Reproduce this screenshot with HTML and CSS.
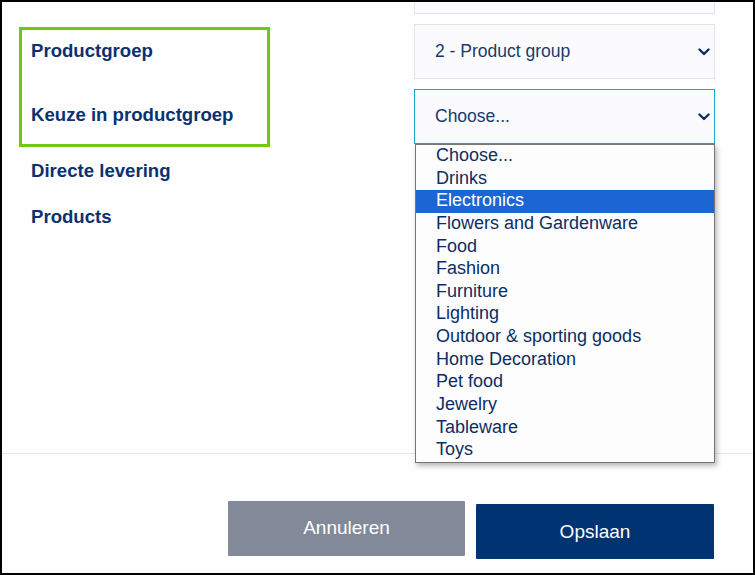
FILE: index.html
```html
<!DOCTYPE html>
<html lang="nl">
<head>
<meta charset="utf-8">
<title>Productgroep</title>
<link rel="stylesheet" href="styles.css">
</head>
<body>
<div class="frame">
  <div class="form">
    <div class="labels">
      <div class="highlight-box">
        <div class="label label-first">Productgroep</div>
        <div class="label label-second">Keuze in productgroep</div>
      </div>
      <div class="label label-directe">Directe levering</div>
      <div class="label label-products">Products</div>
    </div>
    <div class="fields">
      <div class="stub"></div>
      <div class="select">
        <span>2 - Product group</span>
        <svg class="chev" width="12" height="8" viewBox="0 0 12 8"><polyline points="1.5,1.5 6,6 10.5,1.5" fill="none" stroke="#0d2f66" stroke-width="2.4" stroke-linecap="round" stroke-linejoin="round"/></svg>
      </div>
      <div class="select-wrap">
        <div class="select select-active">
          <span>Choose...</span>
          <svg class="chev" width="12" height="8" viewBox="0 0 12 8"><polyline points="1.5,1.5 6,6 10.5,1.5" fill="none" stroke="#0d2f66" stroke-width="2.4" stroke-linecap="round" stroke-linejoin="round"/></svg>
        </div>
        <ul class="dropdown">
          <li>Choose...</li>
          <li>Drinks</li>
          <li class="selected">Electronics</li>
          <li>Flowers and Gardenware</li>
          <li>Food</li>
          <li>Fashion</li>
          <li>Furniture</li>
          <li>Lighting</li>
          <li>Outdoor &amp; sporting goods</li>
          <li>Home Decoration</li>
          <li>Pet food</li>
          <li>Jewelry</li>
          <li>Tableware</li>
          <li>Toys</li>
        </ul>
      </div>
    </div>
  </div>
  <div class="footer">
    <button class="btn btn-cancel">Annuleren</button>
    <button class="btn btn-save">Opslaan</button>
  </div>
</div>
</body>
</html>
```

FILE: styles.css
```css
html, body {
  margin: 0;
  padding: 0;
  background: #fff;
}

.frame {
  width: 755px;
  height: 575px;
  box-sizing: border-box;
  border: 2px solid #000;
  background: #fefefe;
  font-family: "Liberation Sans", Arial, sans-serif;
  display: flex;
  flex-direction: column;
}

.form {
  height: 452px;
  box-sizing: border-box;
  border-bottom: 1px solid #e4e4ec;
  display: flex;
  justify-content: space-between;
  padding-left: 17px;
  padding-right: 38px;
}

.labels {
  margin-top: 25px;
  display: flex;
  flex-direction: column;
  align-items: flex-start;
}

.highlight-box {
  width: 251px;
  box-sizing: border-box;
  border: 3px solid #6dc911;
  padding: 9px 9px 17px;
}

.label {
  font-size: 18.6px;
  font-weight: bold;
  line-height: 24px;
  color: #0b3170;
  white-space: nowrap;
}

.label-second {
  margin-top: 40px;
}

.label-directe {
  margin-top: 11.5px;
  padding-left: 12px;
}

.label-products {
  margin-top: 22px;
  padding-left: 12px;
}

.fields {
  width: 301px;
  display: flex;
  flex-direction: column;
}

.stub {
  height: 12px;
  box-sizing: border-box;
  border: 1px solid #e3e4ea;
  border-top: none;
  background: #fbfbfd;
}

.select {
  margin-top: 10px;
  height: 55px;
  box-sizing: border-box;
  border: 1px solid #e3e4ea;
  background: #fbfbfd;
  display: flex;
  align-items: center;
  justify-content: space-between;
  padding-left: 20px;
  padding-right: 4px;
  font-size: 17.5px;
  color: #163b6e;
}

.chev {
  display: block;
  margin-top: 1px;
}

.select-wrap {
  position: relative;
}

.select-active {
  border-color: #14aacb;
}

.dropdown {
  position: absolute;
  top: 100%;
  left: 1px;
  width: 300px;
  box-sizing: border-box;
  margin: 0;
  padding: 0;
  list-style: none;
  border: 1px solid #767676;
  background: #fdfdfd;
  box-shadow: 2px 3px 5px rgba(0, 0, 0, 0.28);
  z-index: 5;
}

.dropdown li {
  height: 22.643px;
  line-height: 21.6px;
  padding-left: 20px;
  font-size: 18px;
  color: #0d2d63;
  white-space: nowrap;
}

.dropdown li.selected {
  background: #1b66d2;
  color: #fff;
}

.footer {
  display: flex;
  justify-content: flex-end;
  align-items: flex-start;
  gap: 11px;
  padding-top: 47px;
  padding-right: 39px;
}

.btn {
  height: 55px;
  border: none;
  border-radius: 1px;
  font-family: "Liberation Sans", Arial, sans-serif;
  font-size: 19px;
  color: #fff;
  padding: 0;
  margin: 0;
}

.btn-cancel {
  width: 237px;
  background: #828a9a;
  padding-bottom: 2px;
}

.btn-save {
  width: 238px;
  margin-top: 3px;
  background: #003371;
}
```
